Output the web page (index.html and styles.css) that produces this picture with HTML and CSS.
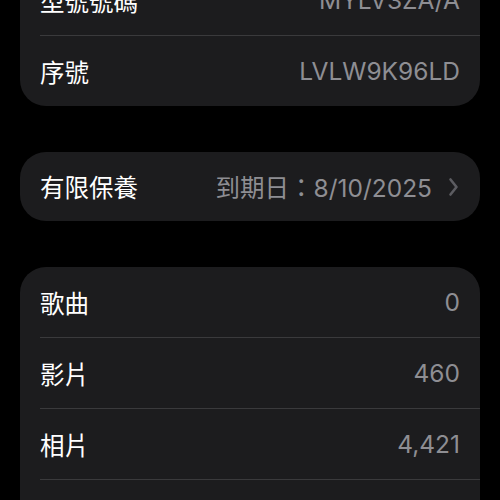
FILE: index.html
```html
<!DOCTYPE html>
<html>
<head>
  <title>關於本機</title>
  <meta charset="utf-8" />
  <link rel="stylesheet" href="styles.css">
</head>
<body>
  <div class="page">

    <div class="group group-top">
      <div class="row">
        <span class="label">型號號碼</span>
        <span class="value">MYLV3ZA/A</span>
      </div>
      <div class="row">
        <span class="label">序號</span>
        <span class="value">LVLW9K96LD</span>
      </div>
    </div>

    <div class="group group-single">
      <div class="row">
        <span class="label">有限保養</span>
        <span class="value">到期日：8/10/2025</span>
        <svg class="chevron" width="11" height="20" viewBox="0 0 11 20">
          <path d="M2.5 2.5 L8.5 10 L2.5 17.5" fill="none" stroke="#5c5c61" stroke-width="2.6" stroke-linecap="round" stroke-linejoin="round" />
        </svg>
      </div>
    </div>

    <div class="group">
      <div class="row">
        <span class="label">歌曲</span>
        <span class="value">0</span>
      </div>
      <div class="row">
        <span class="label">影片</span>
        <span class="value">460</span>
      </div>
      <div class="row">
        <span class="label">相片</span>
        <span class="value">4,421</span>
      </div>
      <div class="row">
        <span class="label">應用程式</span>
        <span class="value">112</span>
      </div>
    </div>

  </div>
</body>
</html>
```

FILE: styles.css
```css
body {
  margin: 0;
  padding: 0;
  background: #000;
  font-family: Inter, "Noto Sans CJK TC", sans-serif;
  font-size: 24.5px;
  color: #fff;
  overflow: hidden;
}

.page {
  display: flex;
  flex-direction: column;
  gap: 46px;
  padding: 0 20px;
  margin-top: -35px;
}

.group {
  background: #1c1c1e;
  border-radius: 26px;
  padding-left: 20px;
}

.row {
  display: flex;
  align-items: center;
  height: 70px;
  padding-right: 20px;
  gap: 16px;
}

.group-single .row {
  height: 69px;
  padding-right: 21px;
}

/* separator inset like iOS lists */
.row + .row {
  border-top: 1px solid #3a3a3c;
}

.label {
  flex: 1;
  white-space: nowrap;
}

.value {
  color: #8e8e93;
  white-space: nowrap;
}
```
